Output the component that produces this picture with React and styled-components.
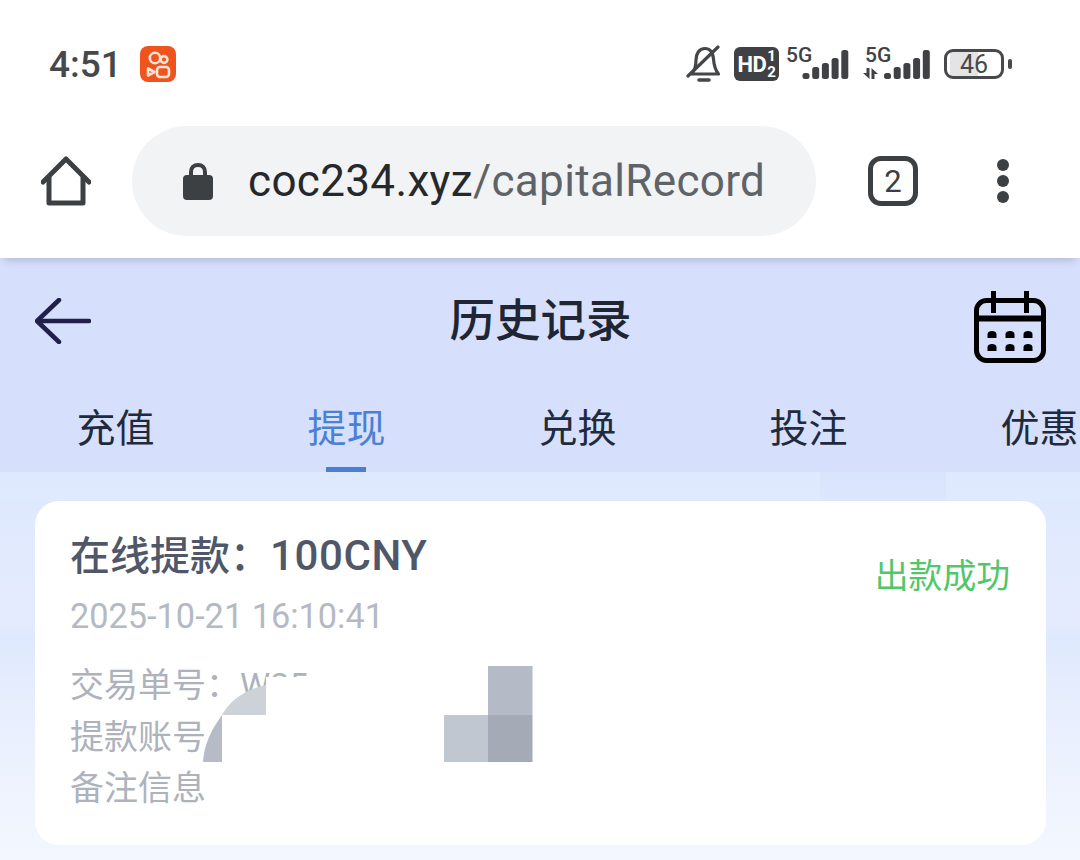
import * as React from "react"
import styled, { createGlobalStyle } from "styled-components"

const GlobalStyle = createGlobalStyle`
  html, body {
    margin: 0;
    padding: 0;
    background: #fff;
  }
  body {
    font-family: Roboto, "Noto Sans CJK SC", sans-serif;
  }
`

const Page = styled.div`
  width: 1080px;
  height: 860px;
  overflow: hidden;
  display: flex;
  flex-direction: column;
  background: #fff;
`

const StatusBar = styled.div`
  height: 128px;
  flex: none;
  display: flex;
  align-items: center;
  padding: 0 76px 0 49px;
`

const Clock = styled.div`
  font-size: 37px;
  font-weight: 500;
  color: #46484c;
  margin-right: 18px;
`

const StatusRight = styled.div`
  margin-left: auto;
  display: flex;
  align-items: center;
`

const HdBadge = styled.div`
  width: 45px;
  height: 34px;
  margin: 0 7px 0 14px;
  border-radius: 6px;
  background: #404144;
  color: #fff;
  display: flex;
  align-items: center;
  justify-content: center;
  gap: 1px;
  font-weight: 700;
  font-size: 22px;
  letter-spacing: -0.5px;
`

const HdStack = styled.span`
  display: flex;
  flex-direction: column;
  font-size: 15px;
  line-height: 16px;
  font-weight: 700;
`

const SignalGap = styled.span`
  width: 14px;
`

const Battery = styled.div`
  width: 60px;
  height: 30px;
  box-sizing: border-box;
  margin-left: 14px;
  border: 3px solid #48494c;
  border-radius: 9px;
  position: relative;
  display: flex;
  align-items: center;
  justify-content: center;
  font-size: 25px;
  color: #48494c;
  background: linear-gradient(to right, #fff 3px, #e4e4e4 3px, #e4e4e4 31px, #fff 31px);

  &::after {
    content: "";
    position: absolute;
    right: -11px;
    top: 7px;
    width: 4px;
    height: 10px;
    border-radius: 2px;
    background: #48494c;
  }
`

const BrowserBar = styled.div`
  height: 130px;
  flex: none;
  display: flex;
  align-items: center;
  padding: 0 0 24px 41px;
  box-sizing: border-box;
  position: relative;
  z-index: 2;
  background: #fff;
  box-shadow: 0 6px 8px -4px rgba(80, 90, 130, 0.3);
`

const UrlPill = styled.div`
  width: 684px;
  height: 110px;
  margin-left: 41px;
  border-radius: 55px;
  background: #f1f3f4;
  display: flex;
  align-items: center;
  padding-left: 51px;
  box-sizing: border-box;
`

const UrlText = styled.div`
  margin-left: 35px;
  font-size: 44px;
  letter-spacing: 0.35px;
  color: #26282b;
  white-space: nowrap;
`

const UrlPath = styled.span`
  color: #5f6368;
`

const TabCount = styled.div`
  width: 50px;
  height: 50px;
  box-sizing: border-box;
  margin-left: 52px;
  border: 5px solid #3c4043;
  border-radius: 13px;
  display: flex;
  align-items: center;
  justify-content: center;
  font-size: 31px;
  color: #3c4043;
`

const MenuDots = styled.div`
  margin-left: 79px;
  display: flex;
  flex-direction: column;
  gap: 4px;
`

const MenuDot = styled.span`
  width: 12px;
  height: 12px;
  border-radius: 50%;
  background: #3c4043;
`

const Header = styled.div`
  flex: none;
  background: #d6e0fc;
`

const TitleRow = styled.div`
  height: 124px;
  display: flex;
  align-items: center;
  justify-content: space-between;
  padding: 0 34px 0 35px;
`

const Title = styled.div`
  font-family: "Noto Sans CJK SC", sans-serif;
  font-size: 45.5px;
  font-weight: 500;
  margin: -6px 0 0 16px;
  color: #1f2533;
`

const BackArrowIcon = styled.svg`
  margin-top: 2px;
`

const CalendarSvg = styled.svg`
  margin-top: 13px;
`

const Tabs = styled.div`
  height: 90px;
  display: flex;
  overflow: hidden;
`

const Tab = styled.div`
  flex: 0 0 231px;
  box-sizing: border-box;
  padding-bottom: 4px;
  position: relative;
  display: flex;
  align-items: center;
  justify-content: center;
  font-family: "Noto Sans CJK SC", sans-serif;
  font-size: 39px;
  color: ${({ $active }) => ($active ? "#4a80d6" : "#1f2a3c")};

  &::after {
    content: "";
    display: ${({ $active }) => ($active ? "block" : "none")};
    position: absolute;
    left: 95px;
    bottom: 0;
    width: 40px;
    height: 5px;
    background: #4a7fd4;
  }
`

const Content = styled.div`
  flex: 1;
  padding: 29px 34px 0 35px;
  background:
    linear-gradient(#d9e4fd, #dce7fd) 820px 0 / 126px 29px no-repeat,
    linear-gradient(#dfe9fe, #e0eafe) 0 0 / 100% 29px no-repeat,
    linear-gradient(#dde8fe 0, #e5ebfd 150px, #dfe9fd 165px, #e9effe 250px, #f3f7ff 388px);
`

const Card = styled.div`
  height: 344px;
  box-sizing: border-box;
  position: relative;
  padding: 28px 36px 0 35px;
  border-radius: 24px;
  background: #fff;
`

const CardTop = styled.div`
  display: flex;
  justify-content: space-between;
`

const CardTitle = styled.div`
  font-family: Roboto, "Noto Sans CJK SC", sans-serif;
  font-size: 40px;
  line-height: 54px;
  font-weight: 500;
  color: #4f5769;
`

const CardAmount = styled.span`
  font-size: 42px;
  letter-spacing: 0.6px;
`

const CardStatus = styled.div`
  font-family: "Noto Sans CJK SC", sans-serif;
  font-size: 33.8px;
  line-height: 50px;
  margin-top: 20px;
  color: #4fc76a;
`

const CardDate = styled.div`
  font-size: 34.3px;
  line-height: 50px;
  margin-top: -8px;
  color: #b4b9c4;
`

const CardRows = styled.div`
  margin-top: 19px;
`

const CardRow = styled.div`
  font-family: Roboto, "Noto Sans CJK SC", sans-serif;
  font-size: 34px;
  line-height: 51.5px;
  color: #adb2bd;
  white-space: pre;
`

const Redaction = styled.svg`
  position: absolute;
  left: 168px;
  top: 159px;
`

const Bell = () => (
  <svg width="34" height="38" viewBox="0 0 34 38" fill="none" stroke="#45464a" strokeWidth="3.2" strokeLinecap="round" strokeLinejoin="round">
    <path d="M5 29 C9 26 10 21 10 15 C10 9 13 3.5 19 3.5 C25 3.5 27 9 27.5 14 C28 21 30 26 32.5 29 Z" />
    <path d="M13 35 H23" strokeWidth="3.6" />
    <path d="M2 31 L32 2" />
  </svg>
)

const Signal = ({ showArrows, width }) => {
  const offset = showArrows ? 21 : 16.5
  const tops = [24, 18, 14, 9, 1]
  return (
    <svg width={width} height="44" viewBox={`0 0 ${width} 44`}>
      <text x={showArrows ? 2 : 0} y="20" fontFamily="Roboto, sans-serif" fontWeight="500" fontSize="21" fill="#404144">5G</text>
      {tops.map((top, i) => (
        <rect key={i} x={offset + i * 9.7} y={top + 7} width="7" height={30 - top} rx="2.5" fill="#404144" />
      ))}
      {showArrows && <path d="M3.5 26 H6.5 V37 L0 31 H3.5 Z M8.5 26 L15 32 H11.5 V37 H8.5 Z" fill="#404144" />}
    </svg>
  )
}

const KuaishouIcon = () => (
  <svg width="36" height="36" viewBox="0 0 36 36">
    <rect width="36" height="36" rx="8" fill="#f0541e" />
    <g fill="none" stroke="#fde3d3" strokeWidth="2.6" strokeLinejoin="round">
      <circle cx="15" cy="12" r="5.2" />
      <circle cx="24" cy="13.5" r="3.4" />
      <rect x="17" y="21" width="12" height="10" rx="3" />
      <path d="M8 22.5 L14.5 26 L8 29.5 Z" />
    </g>
  </svg>
)

const HomeIcon = () => (
  <svg width="50" height="50" viewBox="0 0 50 50" fill="none" stroke="#3c4043" strokeWidth="5" strokeLinecap="round" strokeLinejoin="round">
    <path d="M2 26 L25 3 L48 26" />
    <path d="M8 22 V47 H42 V22" />
  </svg>
)

const LockIcon = () => (
  <svg width="30" height="38" viewBox="0 0 30 38">
    <path d="M8 15 V10 C8 5.5 11 3 15 3 C19 3 22 5.5 22 10 V15" fill="none" stroke="#3c4043" strokeWidth="4" />
    <rect y="13" width="30" height="25" rx="4" fill="#3c4043" />
  </svg>
)

const BackArrow = () => (
  <BackArrowIcon width="56" height="46" viewBox="0 0 56 46" fill="none" stroke="#231f4d" strokeWidth="4.5" strokeLinecap="round" strokeLinejoin="round">
    <path d="M54 23 H3" />
    <path d="M24 2 L2 23 L24 44" />
  </BackArrowIcon>
)

const CalendarIcon = () => (
  <CalendarSvg width="72" height="72" viewBox="0 0 72 72" fill="none">
    <rect x="2.5" y="9.5" width="67" height="60" rx="10" stroke="#000" strokeWidth="5" />
    <path d="M3 27.5 H69" stroke="#000" strokeWidth="6" />
    <path d="M19.5 0 V22 M52.5 0 V22" stroke="#000" strokeWidth="5" />
    {[40, 53].map(y =>
      [18, 36, 54].map(x => (
        <path key={`${x}-${y}`} d={`M${x - 4.5} ${y + 7} V${y + 3} C${x - 4.5} ${y - 1} ${x + 4.5} ${y - 1} ${x + 4.5} ${y + 3} V${y + 7} Z`} fill="#000" />
      ))
    )}
  </CalendarSvg>
)

const tabs = ["充值", "提现", "兑换", "投注", "优惠"]

const App = () => (
  <Page>
    <GlobalStyle />
    <StatusBar>
      <Clock>4:51</Clock>
      <KuaishouIcon />
      <StatusRight>
        <Bell />
        <HdBadge>
          HD
          <HdStack>
            <span>1</span>
            <span>2</span>
          </HdStack>
        </HdBadge>
        <Signal width={63} />
        <SignalGap />
        <Signal width={67} showArrows />
        <Battery>46</Battery>
      </StatusRight>
    </StatusBar>
    <BrowserBar>
      <HomeIcon />
      <UrlPill>
        <LockIcon />
        <UrlText>
          coc234.xyz<UrlPath>/capitalRecord</UrlPath>
        </UrlText>
      </UrlPill>
      <TabCount>2</TabCount>
      <MenuDots>
        <MenuDot />
        <MenuDot />
        <MenuDot />
      </MenuDots>
    </BrowserBar>
    <Header>
      <TitleRow>
        <BackArrow />
        <Title>历史记录</Title>
        <CalendarIcon />
      </TitleRow>
      <Tabs>
        {tabs.map(tab => (
          <Tab key={tab} $active={tab === "提现"}>{tab}</Tab>
        ))}
      </Tabs>
    </Header>
    <Content>
      <Card>
        <CardTop>
          <CardTitle>在线提款：<CardAmount>100CNY</CardAmount></CardTitle>
          <CardStatus>出款成功</CardStatus>
        </CardTop>
        <CardDate>2025-10-21 16:10:41</CardDate>
        <CardRows>
          <CardRow>交易单号：W25</CardRow>
          <CardRow>提款账号</CardRow>
          <CardRow>备注信息</CardRow>
        </CardRows>
        <Redaction width="335" height="105" viewBox="203 660 335 105">
          <rect x="266" y="677" width="180" height="85" fill="#fff" />
          <rect x="312" y="660" width="135" height="102" fill="#fff" />
          <path d="M222 715 C230 700 246 689 266 685 V715 Z" fill="#cdd1d8" />
          <path d="M203 762 C204 745 211 730 222 715 V762 Z" fill="#b6bbc7" />
          <rect x="222" y="715" width="44" height="47" fill="#fff" />
          <rect x="488" y="666" width="44.5" height="49" fill="#b4bac6" />
          <rect x="444" y="715" width="44" height="47" fill="#c0c7d1" />
          <rect x="488" y="715" width="44.5" height="47" fill="#a4abb7" />
        </Redaction>
      </Card>
    </Content>
  </Page>
)

export default App
